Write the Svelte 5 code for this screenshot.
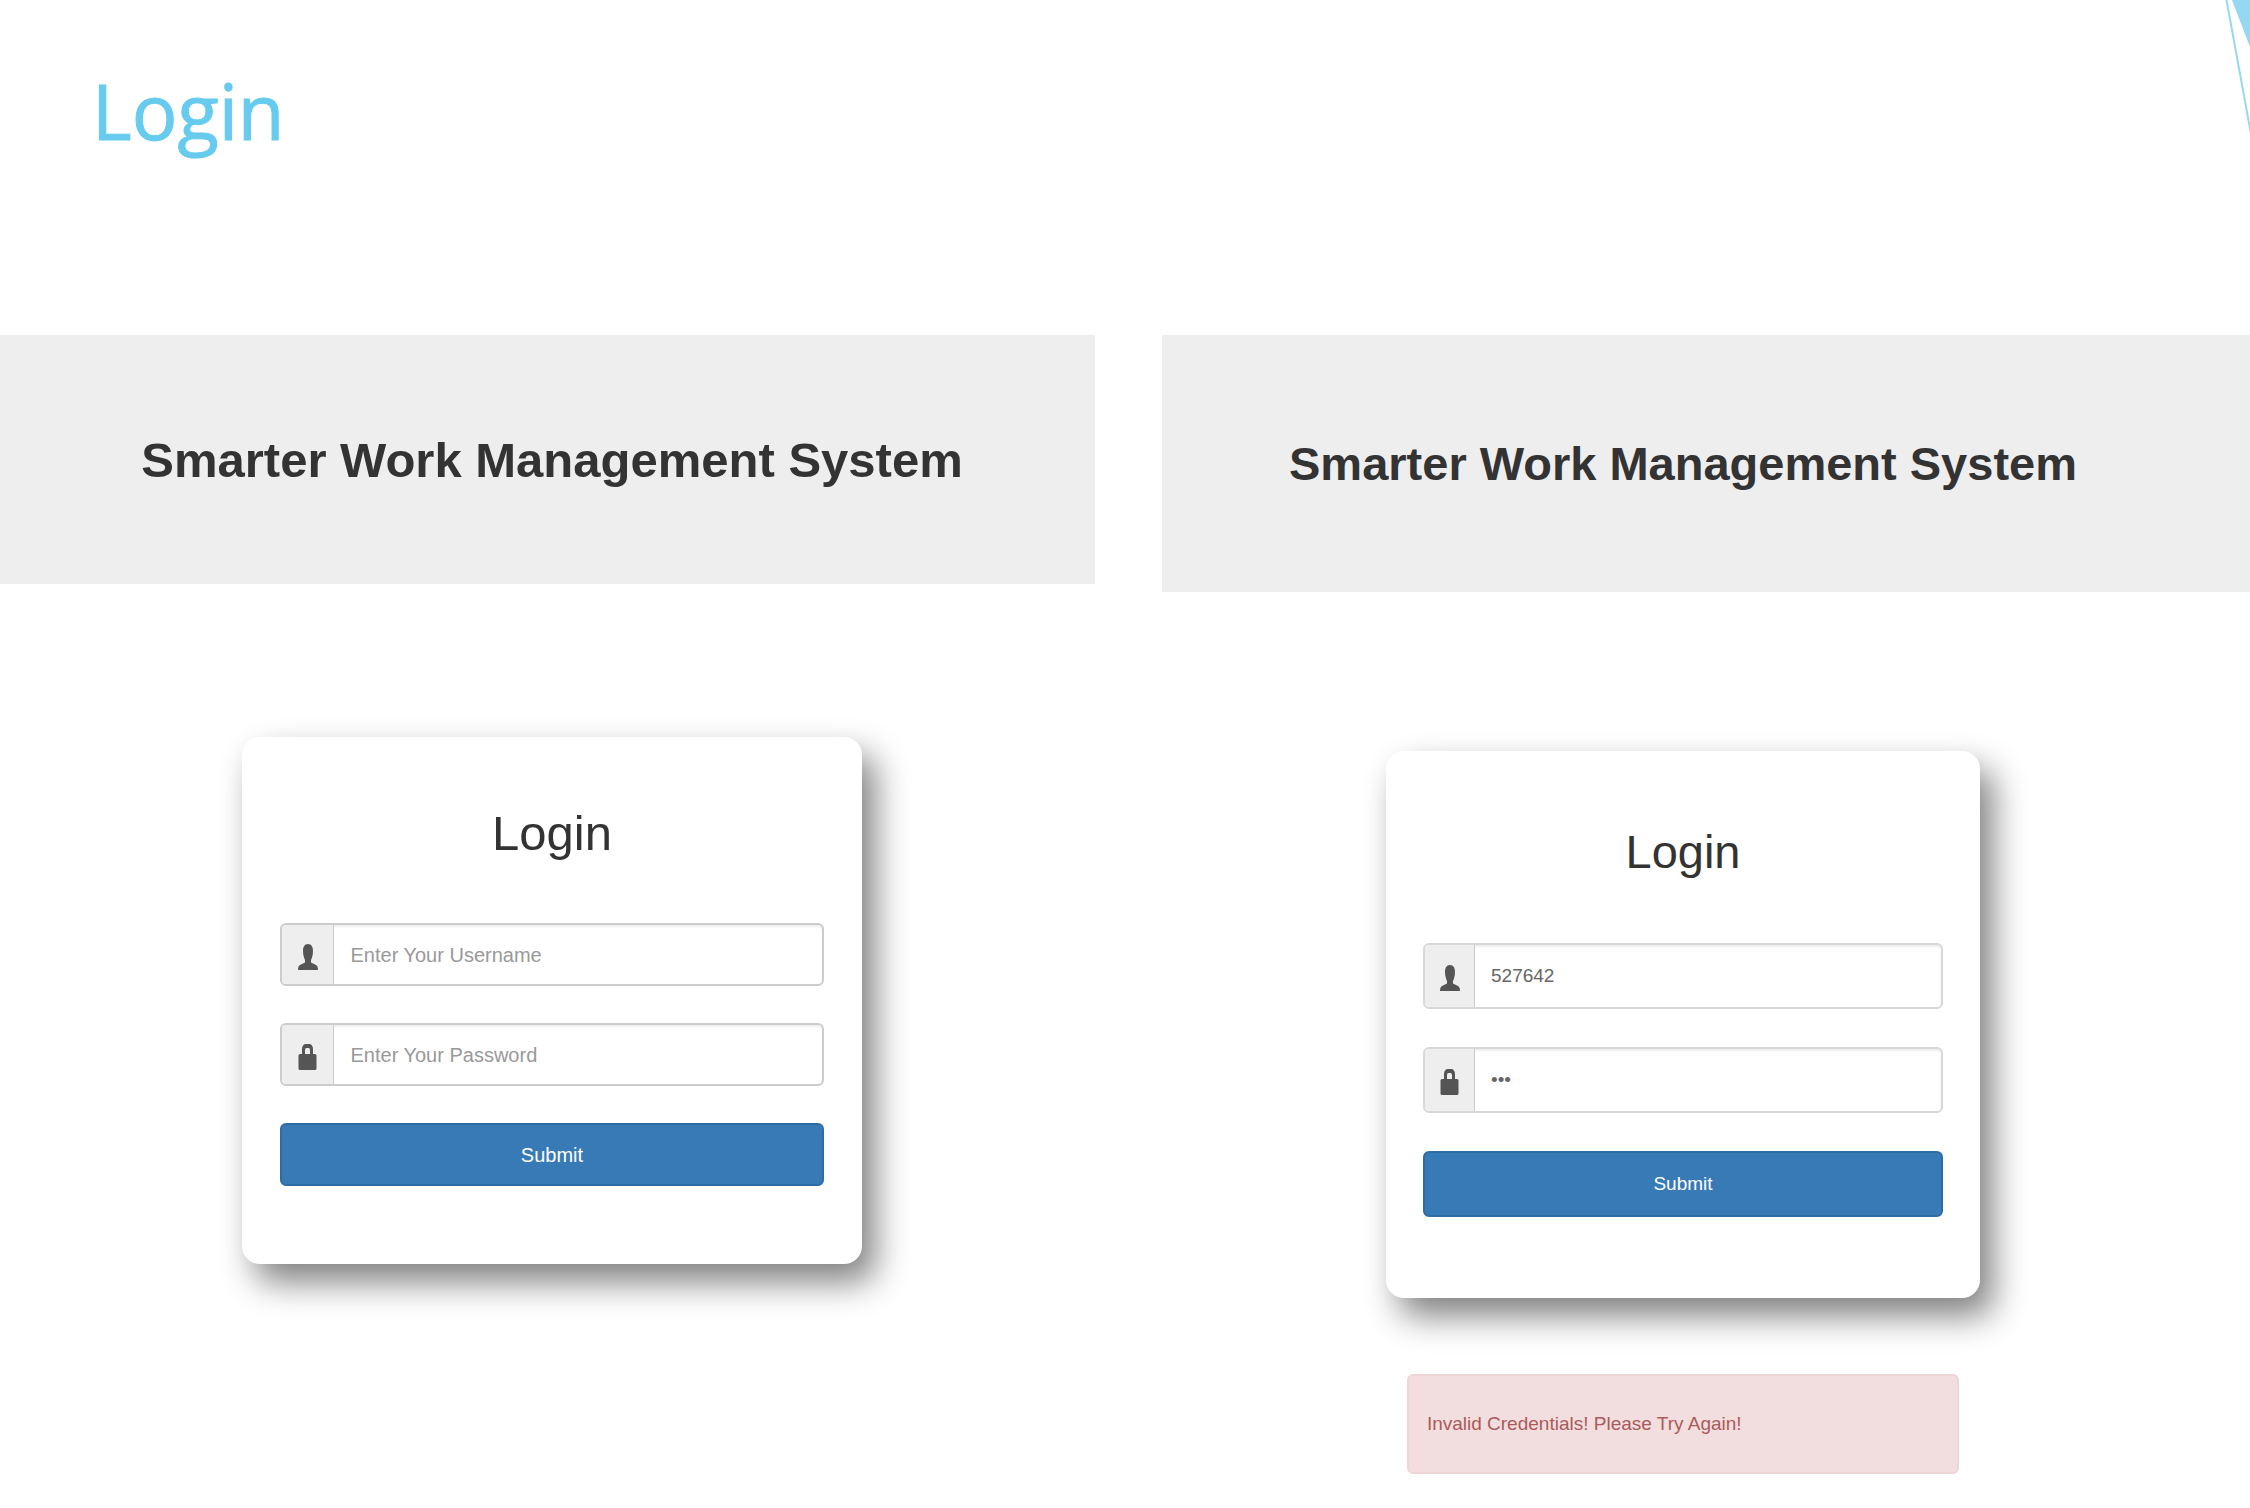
<script>
  const screens = [
    { id: 'empty', username: '', password: '', error: '' },
    {
      id: 'failed',
      username: '527642',
      password: '123',
      error: 'Invalid Credentials! Please Try Again!'
    }
  ];
</script>

<main class="slide">
  <header class="slide-header">
    <h1 class="slide-title">Login</h1>
    <svg class="corner" viewBox="0 0 26 136" aria-hidden="true">
      <path d="M8 0H26V47Z" fill="#94d8f1" />
      <path d="M2.500 0L27 134" fill="none" stroke="#94d8f1" stroke-width="2" />
    </svg>
  </header>

  <div class="screens">
    {#each screens as screen (screen.id)}
      <section class="screen {screen.id}">
        <div class="banner">
          <h2>Smarter Work Management System</h2>
        </div>
        <div class="content">
          <form class="card" onsubmit={(e) => e.preventDefault()}>
            <h3>Login</h3>
            <div class="group">
              <label class="addon" for="{screen.id}-user" aria-label="Username">
                <svg class="icon" viewBox="0 0 20 26" aria-hidden="true">
                  <path
                    d="M10 0C13.500 0 15 3 15 7C15 11 14 14 13 16V18.500L18 21Q20 22 20 26H0Q0 22 2 21L7 18.500V16C6 14 5 11 5 7C5 3 6.500 0 10 0Z"
                  />
                </svg>
              </label>
              <input
                id="{screen.id}-user"
                type="text"
                placeholder="Enter Your Username"
                value={screen.username}
              />
            </div>
            <div class="group">
              <label class="addon" for="{screen.id}-pass" aria-label="Password">
                <svg class="icon" viewBox="0 0 20 26" aria-hidden="true">
                  <path
                    fill-rule="evenodd"
                    d="M4 10V5C4 2 5.500 0 8 0H11C13.500 0 15 2 15 5V10H17Q18.500 10 18.500 11.500V24.500Q18.500 26 17 26H2Q.5 26 .5 24.500V11.500Q.5 10 2 10ZM7 10H12V6Q12 4 10.500 4H8.500Q7 4 7 6Z"
                  />
                </svg>
              </label>
              <input
                id="{screen.id}-pass"
                type="password"
                placeholder="Enter Your Password"
                value={screen.password}
              />
            </div>
            <button type="submit">Submit</button>
          </form>
          {#if screen.error}
            <p class="alert" role="alert">{screen.error}</p>
          {/if}
        </div>
      </section>
    {/each}
  </div>
</main>

<style>
  :global(body) {
    margin: 0;
    background: #fff;
  }

  .slide {
    min-height: 100vh;
    font-family: 'Liberation Sans', Arial, sans-serif;
    color: #333;
    overflow: hidden;
  }

  .slide-header {
    position: relative;
    box-sizing: border-box;
    height: 335px;
    padding: 61px 92px 0;
  }

  .slide-title {
    margin: 0;
    font: 400 76px/100px 'Open Sans', sans-serif;
    color: #66cbee;
    -webkit-text-stroke: 1px #66cbee;
  }

  .corner {
    position: absolute;
    top: 0;
    right: 0;
    width: 26px;
    height: 136px;
  }

  .screens {
    display: grid;
    grid-template-columns: 1095fr 1088fr;
    column-gap: 67px;
    align-items: start;
  }

  .screen {
    --heading: 49px;
    --text: 20px;
    --field: 63px;
    --gap: 37px;
    --addon: 51px;
    --shift-left: 9px;
    --shift-right: 0px;
  }

  .screen.failed {
    --heading: 47px;
    --text: 19px;
    --field: 66px;
    --gap: 38px;
    --addon: 49px;
    --shift-left: 0px;
    --shift-right: 46px;
  }

  .banner {
    display: flex;
    align-items: center;
    justify-content: center;
    box-sizing: border-box;
    height: 249px;
    padding: 0 var(--shift-right) 0 var(--shift-left);
    background: #eee;
  }

  .failed .banner {
    height: 257px;
  }

  h2,
  h3 {
    margin: 0;
    font-size: var(--heading);
    line-height: 72px;
    text-align: center;
    white-space: nowrap;
  }

  h3 {
    margin-bottom: 17px;
    font-weight: 400;
  }

  .content {
    display: flex;
    flex-direction: column;
    align-items: center;
    padding: 153px var(--shift-right) 0 var(--shift-left);
  }

  .failed .content {
    padding-top: 159px;
  }

  .card {
    display: flex;
    flex-direction: column;
    gap: var(--gap);
    box-sizing: border-box;
    width: 57%;
    padding: 60px 38px 78px;
    border-radius: 18px;
    background: #fff;
    box-shadow: 13px 18px 34px #808080;
  }

  .failed .card {
    padding: 65px 37px 81px;
  }

  .group {
    display: flex;
    box-sizing: border-box;
    height: var(--field);
    border: 2px solid #ccc;
    border-radius: 6px;
    background: #fff;
    box-shadow: inset 0 2px 2px #eee;
    overflow: hidden;
  }

  .failed .group {
    border-color: #d8d8d8;
  }

  .addon {
    display: flex;
    flex: none;
    align-items: center;
    justify-content: center;
    width: var(--addon);
    border-right: 1px solid #ccc;
    background: #eee;
  }

  .icon {
    width: 20px;
    height: 26px;
    margin-top: 4px;
    fill: #555;
  }

  input {
    flex: 1;
    min-width: 0;
    padding: 0 16px;
    border: 0;
    outline: 0;
    background: transparent;
    font: 400 var(--text) / 30px 'Liberation Sans', Arial, sans-serif;
    color: #666;
  }

  input::placeholder {
    color: #999;
    opacity: 1;
  }

  button {
    height: var(--field);
    padding: 0;
    border: 2px solid #2e6da4;
    border-radius: 6px;
    background: #387ab5;
    color: #fff;
    font: 400 var(--text) / 30px 'Liberation Sans', Arial, sans-serif;
  }

  .alert {
    box-sizing: border-box;
    width: 53%;
    margin: 76px 0 0;
    padding: 33px 18px;
    border: 2px solid #eed5d7;
    border-radius: 6px;
    background: #f2dede;
    color: #ab5a5c;
    font-size: var(--text);
    line-height: 30px;
  }
</style>
